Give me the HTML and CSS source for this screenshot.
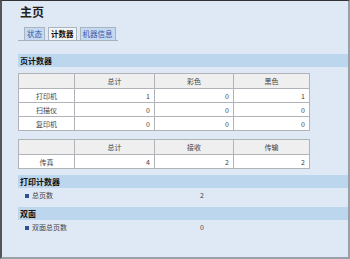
FILE: index.html
```html
<!DOCTYPE html>
<html>
<head>
<meta charset="utf-8">
<link rel="stylesheet" href="styles.css">
</head>
<body>
<div class="frame">
  <h1 class="title">主页</h1>
  <div class="tabs">
    <span class="tab">状态</span>
    <span class="tab active">计数器</span>
    <span class="tab">机器信息</span>
  </div>
  <div class="bar bar-first">页计数器</div>
  <table class="grid">
    <tr class="head"><td></td><td>总计</td><td>彩色</td><td>黑色</td></tr>
    <tr><td class="name">打印机</td><td class="num">1</td><td class="num">0</td><td class="num">1</td></tr>
    <tr><td class="name">扫描仪</td><td class="num">0</td><td class="num">0</td><td class="num">0</td></tr>
    <tr><td class="name">复印机</td><td class="num">0</td><td class="num">0</td><td class="num">0</td></tr>
  </table>
  <table class="grid grid-second">
    <tr class="head"><td></td><td>总计</td><td>接收</td><td>传输</td></tr>
    <tr><td class="name">传真</td><td class="num">4</td><td class="num">2</td><td class="num">2</td></tr>
  </table>
  <div class="bar">打印计数器</div>
  <div class="item"><span class="label"><i class="sq"></i>总页数</span><span class="val">2</span></div>
  <div class="bar">双面</div>
  <div class="item"><span class="label"><i class="sq"></i>双面总页数</span><span class="val">0</span></div>
</div>
</body>
</html>
```
FILE: styles.css
```css
html, body {
  margin: 0;
  padding: 0;
}
body {
  font-family: "Noto Sans CJK SC", "Noto Sans", sans-serif;
  background: #dfe9f5;
}
.frame {
  box-sizing: border-box;
  width: 350px;
  height: 259px;
  border-top: 1px solid #333;
  border-left: 2px solid #555;
  border-right: 2px solid #9aa0a8;
  border-bottom: 2px solid #9aa0a8;
  background: #dfe9f5;
  padding-left: 16px;
  overflow: hidden;
}
.title {
  margin: 0;
  padding-top: 2px;
  height: 20px;
  font-size: 12px;
  line-height: 18px;
  font-weight: bold;
  color: #222;
  padding-left: 2px;
}
.tabs {
  margin-top: 4px;
  width: 94px;
  display: flex;
  gap: 3px;
  padding-left: 6px;
  border-bottom: 1px solid #a8b0b8;
  height: 13px;
}
.tab {
  box-sizing: border-box;
  flex-shrink: 0;
  white-space: nowrap;
  height: 13px;
  padding: 0 2px;
  font-size: 7.5px;
  line-height: 12px;
  color: #3557a8;
  background: #c5daf0;
  border: 1px solid #a8b4c0;
  border-bottom: none;
}
.tab.active {
  background: #f3f4f5;
  color: #111;
  font-weight: bold;
}
.bar {
  height: 13px;
  background: #bcd6ee;
  font-size: 8px;
  line-height: 13px;
  font-weight: bold;
  color: #111;
  padding-left: 2px;
  margin-top: 6px;
}
.bar-first {
  margin-top: 13px;
}
.grid {
  border-collapse: collapse;
  width: 292px;
  margin-top: 6px;
  font-size: 7px;
  color: #444;
  table-layout: fixed;
}
.grid-second {
  margin-top: 8px;
}
.grid td {
  border: 1px solid #b0b4b8;
  height: 13px;
  padding: 0 4px;
  background: #fff;
  line-height: 12px;
}
.grid tr.head td {
  background: #efefef;
  text-align: center;
  height: 14px;
}
.grid td:nth-child(1) { width: 47px; }
.grid td:nth-child(2) { width: 71px; }
.grid td:nth-child(3) { width: 70px; }
.grid td.name { text-align: center; }
.grid td.num { text-align: right; }
.item {
  display: flex;
  height: 11px;
  font-size: 7px;
  line-height: 11px;
  color: #444;
  margin-top: 2px;
}
.label {
  width: 173px;
  padding-left: 7px;
  display: flex;
  align-items: center;
}
.sq {
  display: inline-block;
  width: 4px;
  height: 4px;
  background: #2f4f8f;
  margin-right: 3px;
}
.val {
  padding-left: 2px;
}
```
